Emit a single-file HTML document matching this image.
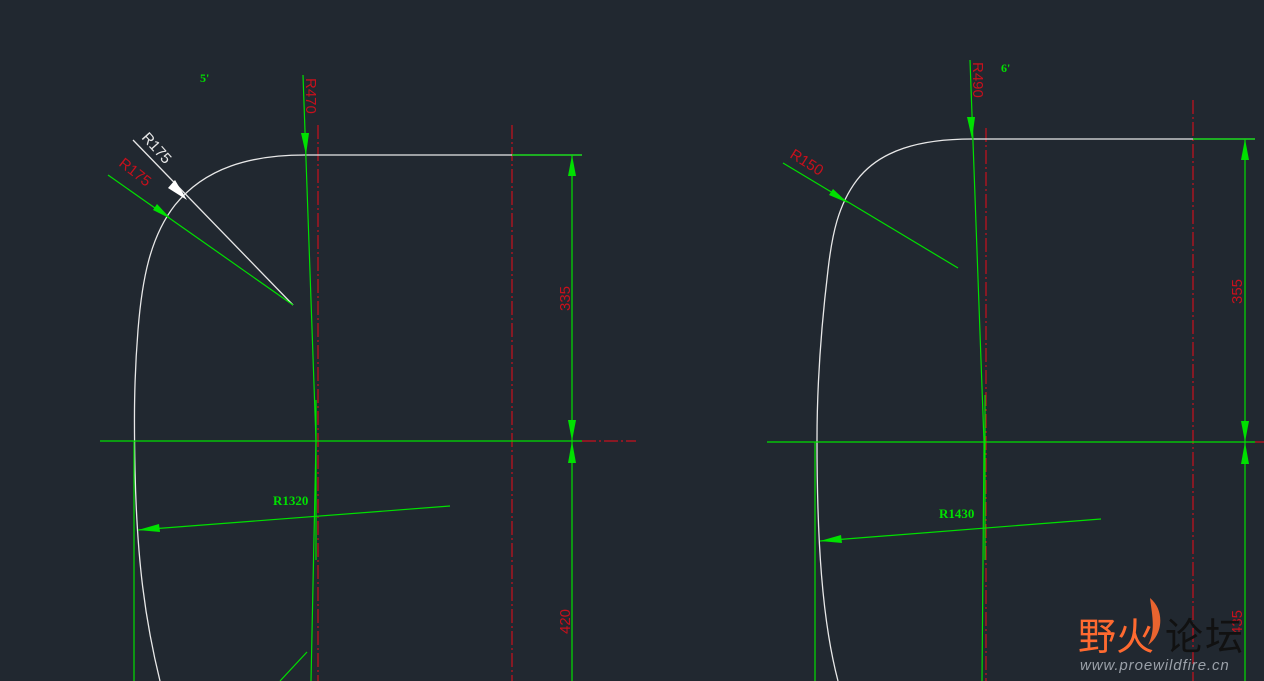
<!DOCTYPE html>
<html><head><meta charset="utf-8"><style>
html,body{margin:0;padding:0;background:#212830;width:1264px;height:681px;overflow:hidden}
svg{display:block}
.g{stroke:#00e000;stroke-width:1.2;fill:none}
.w{stroke:#e8e8e8;stroke-width:1.3;fill:none}
.r{stroke:#c8101c;stroke-width:1.2;fill:none;stroke-dasharray:14 3 2 3}
.rt{fill:#c8101c;font-family:"Liberation Sans",sans-serif;font-size:15px}
.gt{fill:#00e000;font-family:"Liberation Serif",serif;font-size:13px;font-weight:bold}
</style></head><body>
<svg width="1264" height="681" viewBox="0 0 1264 681">
<!-- LEFT -->
<line class="r" x1="318" y1="125" x2="318" y2="681"/>
<line class="r" x1="512" y1="125" x2="512" y2="681"/>
<line class="r" x1="582" y1="441" x2="636" y2="441"/>
<path class="w" d="M582,155 L305,155 C250,155 205,168 175,205 C150,237 142,280 138,330 C134,380 134,420 135,470 C137,560 145,620 160,681"/>
<line class="g" x1="100" y1="441" x2="582" y2="441"/>
<line class="g" x1="134" y1="441" x2="134" y2="681"/>
<line class="g" x1="572" y1="155" x2="572" y2="681"/>
<line class="g" x1="512" y1="155" x2="582" y2="155"/>
<polygon points="572,155 568,176 576,176" fill="#00e000"/>
<polygon points="572,441 568,420 576,420" fill="#00e000"/>
<polygon points="572,441 568,463 576,463" fill="#00e000"/>
<polyline class="g" points="303,75 316,441 311,681"/>
<line class="g" x1="316" y1="400" x2="316" y2="560"/>
<polygon points="306,155 301,133 309,133" fill="#00e000"/>
<line class="w" x1="133" y1="140" x2="293" y2="305"/>
<polygon points="187,200 168,188 175,180" fill="#fff"/>
<line class="g" x1="108" y1="175" x2="293" y2="305"/>
<polygon points="171,219 153,210 157,204" fill="#00e000"/>
<line class="g" x1="138" y1="530" x2="450" y2="506"/>
<polygon points="138,530 159,524 160,532" fill="#00e000"/>
<line class="g" x1="307" y1="652" x2="280" y2="681"/>
<text class="rt" transform="translate(306,78) rotate(90)">R470</text>
<text class="rt" style="fill:#e8e8e8" transform="translate(141,138) rotate(48)">R175</text>
<text class="rt" transform="translate(118,165) rotate(38)">R175</text>
<text class="rt" transform="translate(570,311) rotate(-90)">335</text>
<text class="rt" transform="translate(570,634) rotate(-90)">420</text>
<text class="gt" x="273" y="505">R1320</text>
<text class="gt" x="200" y="82" style="font-size:12px">5'</text>
<!-- RIGHT -->
<line class="r" x1="986" y1="128" x2="986" y2="681"/>
<line class="r" x1="1193" y1="100" x2="1193" y2="681"/>
<line class="r" x1="1255" y1="442" x2="1264" y2="442"/>
<path class="w" d="M1255,139 L972,139 C920,139 880,150 857,180 C838,205 832,235 828,270 C822,320 817,380 817,440 C817,540 822,620 838,681"/>
<line class="g" x1="767" y1="442" x2="1255" y2="442"/>
<line class="g" x1="815" y1="442" x2="815" y2="681"/>
<line class="g" x1="1245" y1="139" x2="1245" y2="681"/>
<line class="g" x1="1193" y1="139" x2="1255" y2="139"/>
<polygon points="1245,139 1241,160 1249,160" fill="#00e000"/>
<polygon points="1245,442 1241,421 1249,421" fill="#00e000"/>
<polygon points="1245,442 1241,464 1249,464" fill="#00e000"/>
<polyline class="g" points="970,60 984,442 982,681"/>
<line class="g" x1="985" y1="395" x2="985" y2="560"/>
<polygon points="972,139 967,117 975,117" fill="#00e000"/>
<line class="g" x1="783" y1="163" x2="958" y2="268"/>
<polygon points="848,203 829,195 833,189" fill="#00e000"/>
<line class="g" x1="820" y1="541" x2="1101" y2="519"/>
<polygon points="820,541 841,535 842,543" fill="#00e000"/>
<text class="rt" transform="translate(973,62) rotate(90)">R490</text>
<text class="rt" transform="translate(789,157) rotate(32)">R150</text>
<text class="rt" transform="translate(1242,304) rotate(-90)">355</text>
<text class="rt" transform="translate(1242,635) rotate(-90)">435</text>
<text class="gt" x="939" y="518">R1430</text>
<text class="gt" x="1001" y="72" style="font-size:12px">6'</text>
<!-- watermark -->
<path d="M1150,598 C1165,610 1163,635 1148,645 C1156,630 1152,615 1150,598 Z" fill="#ff6a30" opacity="0.9"/>
<text x="1078" y="650" font-family="'Liberation Sans','Noto Sans CJK SC',sans-serif" font-size="38" fill="#ff6a30">野火</text>
<text x="1165" y="650" font-family="'Liberation Sans','Noto Sans CJK SC',sans-serif" font-size="38" fill="#111" letter-spacing="2">论坛</text>
<text x="1080" y="670" font-family="'Liberation Sans',sans-serif" font-size="15" font-style="italic" fill="#9aa0a8" letter-spacing="0.9">www.proewildfire.cn</text>
</svg>
</body></html>
